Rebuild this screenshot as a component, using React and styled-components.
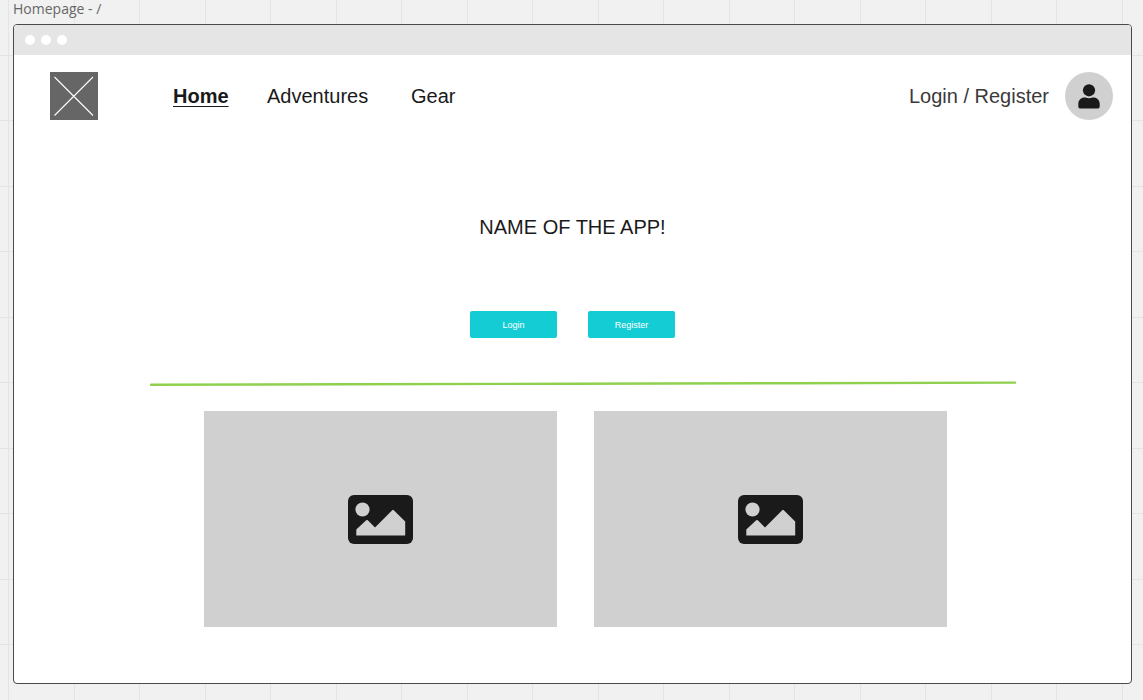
import React from "react";
import styled, { createGlobalStyle } from "styled-components";

const GlobalStyle = createGlobalStyle`
  *, *::before, *::after { box-sizing: border-box; }
  body {
    margin: 0;
    background: #f1f1f1;
    color: #1a1a1a;
    font-family: "Liberation Sans", Arial, sans-serif;
  }
`;

/* Canvas with a ruled grid; two lines per 131px tile. */
const Canvas = styled.div`
  min-height: 100vh;
  display: flex;
  flex-direction: column;
  padding: 0 11px 16px 13px;
  background-color: #f1f1f1;
  background-image:
    linear-gradient(90deg, #e4e4e4 1px, transparent 1px, transparent 66px, #e4e4e4 66px, #e4e4e4 67px, transparent 67px),
    linear-gradient(180deg, #e4e4e4 1px, transparent 1px, transparent 65px, #e4e4e4 65px, #e4e4e4 66px, transparent 66px);
  background-size: 131px 131px;
  background-position: 8px 55px;
`;

const FrameLabel = styled.div`
  height: 24px;
  font-family: "Open Sans", sans-serif;
  font-size: 14px;
  line-height: 18px;
  color: #666;
`;

const BrowserFrame = styled.div`
  flex: 1;
  background: #fff;
  border: 1px solid #4a4a4a;
  border-radius: 4px;
  overflow: hidden;
`;

const TitleBar = styled.div`
  display: flex;
  align-items: center;
  gap: 6px;
  height: 30px;
  padding: 0 11px;
  background: #e5e5e5;
`;

const Dot = styled.span`
  width: 10px;
  height: 10px;
  border-radius: 50%;
  background: #fff;
`;

const Header = styled.header`
  display: flex;
  align-items: center;
  padding: 17px 18px 0 36px;
`;

const Logo = styled.svg`
  display: block;
  width: 48px;
  height: 48px;
  background: #666;
`;

const Nav = styled.nav`
  display: grid;
  grid-template-columns: 94px 144px auto;
  margin-left: 75px;
`;

const TextLink = styled.a`
  justify-self: start;
  font-size: 20px;
  line-height: 24px;
  font-weight: ${(p) => (p.$active ? 700 : 400)};
  color: ${(p) => (p.$muted ? "#3a3a3a" : "#1a1a1a")};
  text-decoration: ${(p) => (p.$active ? "underline" : "none")};
  text-decoration-thickness: 1px;
  text-underline-offset: 3px;
`;

const Account = styled.div`
  display: flex;
  align-items: center;
  gap: 16px;
  margin-left: auto;
`;

const Avatar = styled.svg`
  display: block;
  width: 48px;
  height: 48px;
  border-radius: 50%;
  background: #d0d0d0;
`;

const Hero = styled.section`
  display: flex;
  flex-direction: column;
  align-items: center;
  padding-top: 95px;
`;

const Title = styled.h1`
  margin: 0;
  font-size: 20px;
  line-height: 24px;
  font-weight: 400;
`;

const Actions = styled.div`
  display: flex;
  gap: 31px;
  margin-top: 72px;
`;

const ActionButton = styled.button`
  width: 87px;
  height: 27px;
  padding: 0;
  border: 0;
  border-radius: 2px;
  background: #14cdd4;
  color: #fff;
  font-family: inherit;
  font-size: 9px;
  line-height: 12px;
`;

const DividerBox = styled.div`
  margin: 43px 115px 24px 136px;
`;

const Stroke = styled.svg`
  display: block;
  width: 100%;
  height: 6px;
`;

const Gallery = styled.section`
  display: grid;
  grid-template-columns: 1fr 1fr;
  gap: 37px;
  margin: 0 184px 56px 190px;
`;

const Placeholder = styled.div`
  display: flex;
  align-items: center;
  justify-content: center;
  aspect-ratio: 353 / 216;
  background: #d0d0d0;
`;

const PictureGlyph = styled.svg`
  display: block;
  width: 65px;
  height: 49px;
`;

function PictureIcon() {
  return (
    <PictureGlyph viewBox="0 0 65 49" role="img" aria-label="Image placeholder">
      <rect width="65" height="49" rx="6" fill="#1a1a1a" />
      <circle cx="14.5" cy="14.5" r="7.1" fill="#d0d0d0" />
      <path
        fill="#d0d0d0"
        d="M8.3 40.6V34.6L18.2 25.3Q19 24.6 19.8 25.3L27 32.4L44.2 15.2Q45 14.4 45.8 15.2L57.2 26.6V40.6Z"
      />
    </PictureGlyph>
  );
}

export default function App() {
  return (
    <>
      <GlobalStyle />
      <Canvas>
        <FrameLabel>Homepage - /</FrameLabel>
        <BrowserFrame>
          <TitleBar>
            <Dot />
            <Dot />
            <Dot />
          </TitleBar>
          <Header>
            <Logo viewBox="0 0 48 48" role="img" aria-label="Logo">
              <path d="M4.5 5L43 43.5M43 5L4.5 43.5" stroke="#fff" strokeWidth="1.1" />
            </Logo>
            <Nav>
              <TextLink href="#home" $active>Home</TextLink>
              <TextLink href="#adventures">Adventures</TextLink>
              <TextLink href="#gear">Gear</TextLink>
            </Nav>
            <Account>
              <TextLink href="#account" $muted>Login / Register</TextLink>
              <Avatar viewBox="0 0 48 48" role="img" aria-label="Account">
                <circle cx="24" cy="18.3" r="6.1" fill="#1a1a1a" />
                <path
                  fill="#1a1a1a"
                  d="M13.3 34.4V32C13.3 28.3 16.1 25.6 19.6 25.6H20.6Q24 27 27.4 25.6H28.4C31.9 25.6 34.7 28.3 34.7 32V34.4Q34.7 36.6 32.5 36.6H15.5Q13.3 36.6 13.3 34.4Z"
                />
              </Avatar>
            </Account>
          </Header>
          <main>
            <Hero>
              <Title>NAME OF THE APP!</Title>
              <Actions>
                <ActionButton type="button">Login</ActionButton>
                <ActionButton type="button">Register</ActionButton>
              </Actions>
            </Hero>
            <DividerBox>
              <Stroke viewBox="0 0 866 6" preserveAspectRatio="none" aria-hidden="true">
                <path
                  d="M1 3.8L200 3.3L420 2.7L640 2.2L865 1.6"
                  fill="none"
                  stroke="#8fd14f"
                  strokeWidth="2.4"
                  strokeLinecap="round"
                />
              </Stroke>
            </DividerBox>
            <Gallery>
              <Placeholder><PictureIcon /></Placeholder>
              <Placeholder><PictureIcon /></Placeholder>
            </Gallery>
          </main>
        </BrowserFrame>
      </Canvas>
    </>
  );
}
